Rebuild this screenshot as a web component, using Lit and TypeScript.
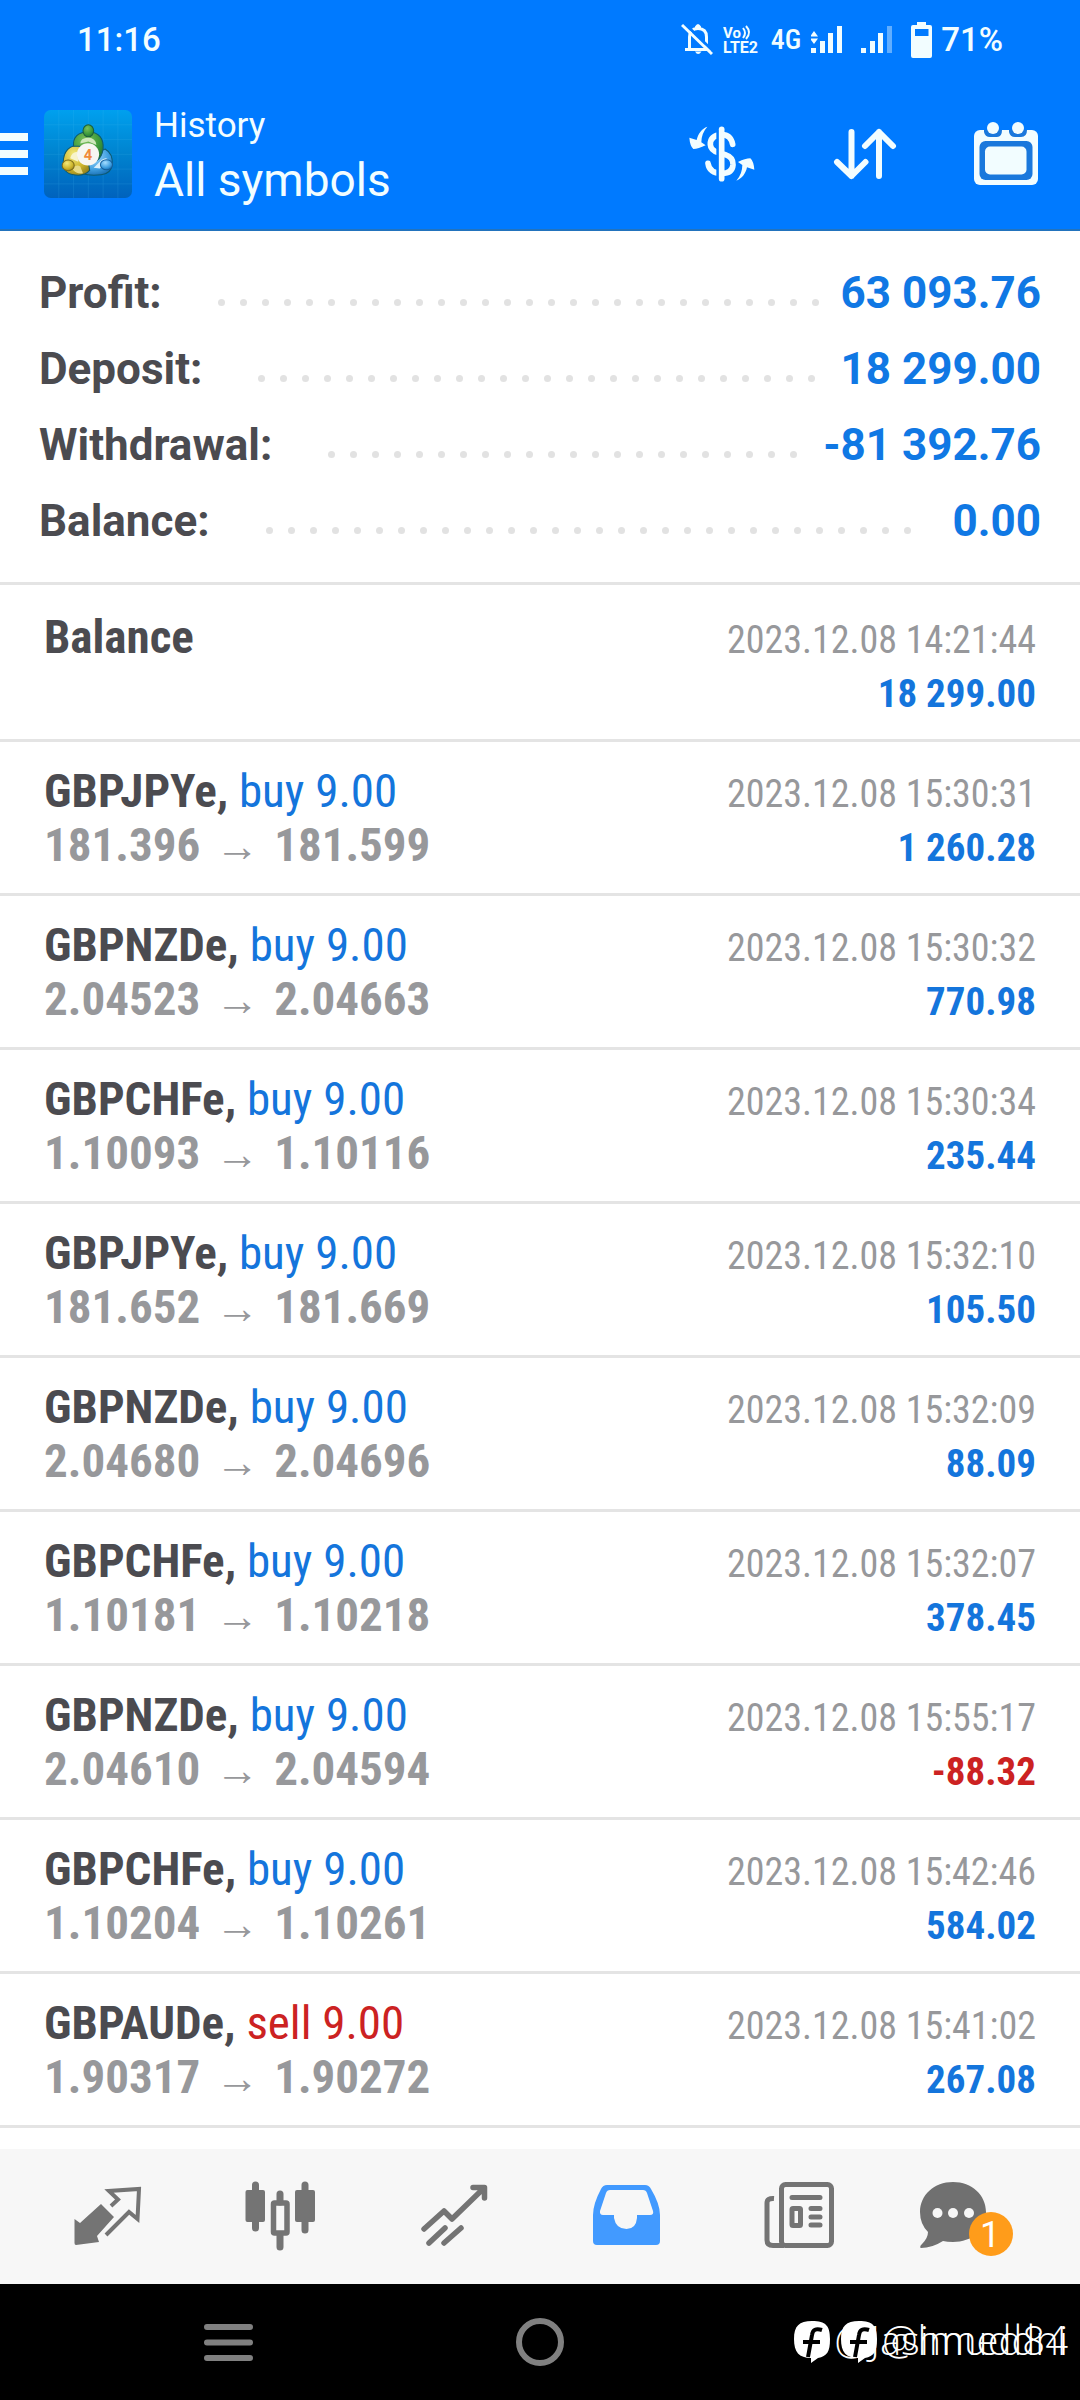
import { LitElement, html, css, svg, nothing } from "lit";
import { customElement, property } from "lit/decorators.js";

type Side = "buy" | "sell";

interface Deal {
  symbol: string;
  side?: Side;
  volume?: string;
  open?: string;
  close?: string;
  time: string;
  amount: string;
}

const SUMMARY = [
  { label: "Profit:", value: "63 093.76" },
  { label: "Deposit:", value: "18 299.00" },
  { label: "Withdrawal:", value: "-81 392.76" },
  { label: "Balance:", value: "0.00" },
];

const DEALS: Deal[] = [
  { symbol: "Balance", time: "2023.12.08 14:21:44", amount: "18 299.00" },
  { symbol: "GBPJPYe", side: "buy", volume: "9.00", open: "181.396", close: "181.599", time: "2023.12.08 15:30:31", amount: "1 260.28" },
  { symbol: "GBPNZDe", side: "buy", volume: "9.00", open: "2.04523", close: "2.04663", time: "2023.12.08 15:30:32", amount: "770.98" },
  { symbol: "GBPCHFe", side: "buy", volume: "9.00", open: "1.10093", close: "1.10116", time: "2023.12.08 15:30:34", amount: "235.44" },
  { symbol: "GBPJPYe", side: "buy", volume: "9.00", open: "181.652", close: "181.669", time: "2023.12.08 15:32:10", amount: "105.50" },
  { symbol: "GBPNZDe", side: "buy", volume: "9.00", open: "2.04680", close: "2.04696", time: "2023.12.08 15:32:09", amount: "88.09" },
  { symbol: "GBPCHFe", side: "buy", volume: "9.00", open: "1.10181", close: "1.10218", time: "2023.12.08 15:32:07", amount: "378.45" },
  { symbol: "GBPNZDe", side: "buy", volume: "9.00", open: "2.04610", close: "2.04594", time: "2023.12.08 15:55:17", amount: "-88.32" },
  { symbol: "GBPCHFe", side: "buy", volume: "9.00", open: "1.10204", close: "1.10261", time: "2023.12.08 15:42:46", amount: "584.02" },
  { symbol: "GBPAUDe", side: "sell", volume: "9.00", open: "1.90317", close: "1.90272", time: "2023.12.08 15:41:02", amount: "267.08" },
];

const DOTS = Array.from({ length: 60 });

@customElement("status-bar")
class StatusBar extends LitElement {
  static styles = css`
    :host { display: flex; align-items: center; height: 78px; padding: 2px 77px 0; box-sizing: border-box; color: #f2fdff; font: 500 33px/40px Roboto, sans-serif; }
    .fill { flex: 1; }
    svg { display: block; }
    .volte { margin-left: 10px; }
    .net { margin-left: 8px; font: 500 28px/40px "Roboto Condensed", Roboto, sans-serif; }
    .sig { margin-left: 10px; }
    .sig2 { margin-left: 18px; }
    .bat { margin: 0 8px 0 18px; }
    text { font-family: Roboto, sans-serif; font-weight: 700; fill: #f2fdff; }
  `;
  render() {
    return html`
      <span>11:16</span><span class="fill"></span>
      <svg width="32" height="36" viewBox="681 21 32 36" fill="none" stroke="#f2fdff" stroke-width="3">
        <path d="M685 48.500H711M689.500 48V36Q690 27.500 698 27.500Q706.500 27.500 706.500 36V48" />
        <path d="M695 27V25.500Q698 20.500 701 25.500V27ZM695 50.500H701.500Q698 55.500 695 50.500Z" fill="#f2fdff" stroke="none" />
        <path d="M684 22L714 51" stroke="#007aff" />
        <path d="M682 24L712 53" />
      </svg>
      <svg class="volte" width="40" height="36" viewBox="724 21 40 36">
        <text x="724" y="37" font-size="15">Vo</text>
        <text x="724" y="52" font-size="16">LTE2</text>
        <path d="M744 27Q748 32 744 37M747 25Q753 31.500 747 38" fill="none" stroke="#f2fdff" stroke-width="2" />
      </svg>
      <span class="net">4G</span>
      <svg class="sig" width="32" height="30" viewBox="811 24 32 30" fill="#f2fdff">
        <path d="M811 47h5v5h-5zM820 40h5v12h-5zM828 32h5v20h-5zM837 25h5v27h-5zM810 35.500L814 30L818 35.500ZM810 37.500L814 43L818 37.500Z" />
      </svg>
      <svg class="sig2" width="32" height="30" viewBox="860 24 32 30" fill="#f2fdff">
        <path d="M860 47h5v5h-5zM869 40h5v12h-5zM877 32h5v20h-5z" />
        <path d="M886 25h5v27h-5z" opacity=".4" />
      </svg>
      <svg class="bat" width="22" height="36" viewBox="909 20 22 36" fill="#f2fdff" fill-rule="evenodd">
        <path d="M915 20H924V23H928Q930 23 930 25V54Q930 56 928 56H911Q909 56 909 54V25Q909 23 911 23H915ZM913 27V34H926.500V27Z" />
      </svg>
      <span>71%</span>`;
  }
}

@customElement("app-toolbar")
class AppToolbar extends LitElement {
  static styles = css`
    :host { display: flex; align-items: center; height: 151px; border-bottom: 2px solid #2273bd; padding-right: 41px; color: #f2fdff; font-family: Roboto, sans-serif; }
    button { display: block; border: 0; padding: 0; margin: 0; background: none; cursor: pointer; }
    svg { display: block; }
    .menu { margin-right: 16px; }
    .titles { flex: 1; margin: 6px 0 0 22px; }
    .screen { font: 400 35px/46px Roboto, sans-serif; margin: 0; }
    .filter { font: 400 46px/62px Roboto, sans-serif; margin: 0; }
    .tools { display: flex; align-items: center; gap: 77px; }
    .four { font: 700 44px Roboto, sans-serif; fill: #f08a3c; }
  `;
  render() {
    return html`
      <button class="menu" aria-label="Open menu">
        <svg width="28" height="42" viewBox="0 0 28 42" fill="#f2fdff"><path d="M0 0H28V8H0ZM0 17H28V25H0ZM0 34H28V42H0Z" /></svg>
      </button>
      <svg width="88" height="88" viewBox="14 16 262 262" role="img" aria-label="MetaTrader 4">
        <defs>
          <linearGradient id="bg" x1="0" y1="0" x2="0" y2="1"><stop offset="0" stop-color="#00a0ee" /><stop offset=".5" stop-color="#0083cf" /><stop offset="1" stop-color="#0062bd" /></linearGradient>
          <radialGradient id="g" cx=".4" cy=".3" r=".8"><stop offset="0" stop-color="#7cc05c" /><stop offset=".6" stop-color="#3c9a3c" /><stop offset="1" stop-color="#1c6a35" /></radialGradient>
          <radialGradient id="y" cx=".4" cy=".3" r=".8"><stop offset="0" stop-color="#f2e97c" /><stop offset=".6" stop-color="#cdb52c" /><stop offset="1" stop-color="#8c7a1c" /></radialGradient>
          <radialGradient id="b" cx=".4" cy=".3" r=".8"><stop offset="0" stop-color="#a4dcff" /><stop offset=".6" stop-color="#3f9fe0" /><stop offset="1" stop-color="#0f62a8" /></radialGradient>
        </defs>
        <rect x="14" y="16" width="262" height="262" rx="20" fill="url(#bg)" />
        <path d="M58 16V278M102 16V278M146 16V278M190 16V278M234 16V278M14 60H276M14 104H276M14 148H276M14 192H276M14 236H276" stroke="#4cc0f4" stroke-width="1.500" opacity=".3" />
        <g stroke="#0d5a70" stroke-width="3">
          <path d="M128 206Q112 176 136 158L196 132Q220 146 217 178Q214 206 184 209Q150 212 128 206Z" fill="url(#b)" />
          <path d="M72 186Q66 128 112 120L140 130L150 196Q132 216 98 208Q78 204 72 186Z" fill="url(#y)" />
          <path d="M102 124Q98 84 146 80Q194 84 190 132Q186 158 172 166L120 124Z" fill="url(#g)" />
        </g>
        <path d="M122 116Q122 100 146 98Q168 100 170 120L146 110Z" fill="#cfe8bc" />
        <path d="M92 160Q96 142 112 140L116 170Z" fill="#f8f4cc" />
        <path d="M162 188L186 164Q202 154 204 166L180 190Z" fill="#d8effc" />
        <path d="M102 186Q112 178 122 184L130 204Q112 208 100 194Z" fill="#e6d985" />
        <ellipse cx="146" cy="78" rx="16" ry="18" fill="url(#g)" stroke="#1c5e3c" stroke-width="3" />
        <ellipse cx="86" cy="181" rx="18" ry="16" fill="url(#y)" stroke="#7b6b1c" stroke-width="3" />
        <ellipse cx="200" cy="179" rx="18" ry="15" fill="url(#b)" stroke="#155f9c" stroke-width="3" />
        <circle cx="145" cy="148" r="33" fill="#f7f6f2" />
        <text class="four" x="145" y="164" text-anchor="middle">4</text>
      </svg>
      <div class="titles"><p class="screen">History</p><h1 class="filter">All symbols</h1></div>
      <div class="tools">
        <button aria-label="Currency">
          <svg width="68" height="64" viewBox="24 6 204 192" fill="#f2fdff">
            <path d="M82 20C66 26 54 40 50 60L28 53Q30 78 40 87Q55 87 77 76L64 67Q64 40 82 20Z" />
            <path d="M169 182C185 176 197 162 201 142L223 149Q221 124 211 115Q196 115 174 126L187 135Q187 162 169 182Z" />
            <path d="M158 73Q152 44 126 44Q90 46 91 74Q92 92 116 98L136 104Q160 112 159 134Q157 160 126 160Q88 160 84 130" fill="none" stroke="#f2fdff" stroke-width="17" stroke-linecap="round" />
            <path d="M113 26V176" stroke="#007aff" stroke-width="8" />
            <path d="M125 28V176" stroke="#f2fdff" stroke-width="17" stroke-linecap="round" />
          </svg>
        </button>
        <button aria-label="Sort">
          <svg width="64" height="64" viewBox="833 122 64 64" fill="none" stroke="#f2fdff" stroke-width="6" stroke-linecap="round" stroke-linejoin="round">
            <path d="M851.500 132V176M837 162L851.500 176L865.500 162M879 176V132M865 146L879 132L893 146" />
          </svg>
        </button>
        <button aria-label="Select period">
          <svg width="65" height="64" viewBox="975 121 65 64">
            <rect x="975" y="129" width="64" height="55" rx="6" fill="#f2fdff" />
            <path d="M985 129V131Q986 136 991 136H998Q1003 136 1003 129ZM1010 129V131Q1011 136 1016 136H1022Q1028 136 1028 129Z" fill="#1a78dc" />
            <circle cx="994" cy="127" r="6" fill="#f2fdff" /><circle cx="1019" cy="127" r="6" fill="#f2fdff" />
            <rect x="980.500" y="140" width="53" height="39" rx="6" fill="#1a78dc" />
            <rect x="986" y="145.500" width="41.500" height="28" rx="5" fill="#f2fdff" />
          </svg>
        </button>
      </div>`;
  }
}

@customElement("summary-row")
class SummaryRow extends LitElement {
  @property() label = "";
  @property() value = "";
  static styles = css`
    :host { display: flex; align-items: center; height: 76px; font: 700 44px/76px Roboto, sans-serif; }
    .label { color: #4b4b50; }
    .dots { flex: 1; display: flex; flex-wrap: wrap; gap: 15px; height: 7px; overflow: hidden; margin: 18px 21px 0 56px; }
    .dot { width: 7px; height: 7px; border-radius: 50%; background: #e2e2e2; }
    .value { color: #1078e4; }
  `;
  render() {
    return html`<span class="label">${this.label}</span>
      <span class="dots">${DOTS.map(() => html`<i class="dot"></i>`)}</span>
      <span class="value">${this.value}</span>`;
  }
}

@customElement("deal-row")
class DealRow extends LitElement {
  @property({ attribute: false }) deal!: Deal;
  static styles = css`
    :host { display: flex; justify-content: space-between; padding: 22px 44px 18px; border-bottom: 3px solid #e4e4e4; font-family: "Roboto Condensed", Roboto, sans-serif; }
    p { margin: 0; font-size: 47px; line-height: 54px; white-space: pre; }
    .symbol { color: #4b4b50; font-weight: 700; }
    .buy, .up { color: #1475dc; }
    .sell, .down { color: #cc2222; }
    .prices { color: #97989b; font-weight: 700; }
    .arrow { margin: 0 15px; font: 700 44px/0 "Liberation Sans", sans-serif; }
    .right { padding-top: 3px; text-align: right; }
    .right .time { color: #97989b; font-size: 38px; }
    .right .amount { font-weight: 700; font-size: 39px; }
  `;
  render() {
    const d = this.deal;
    return html`
      <div>
        <p><span class="symbol">${d.symbol}${d.side ? "," : ""}</span>${d.side ? html` <span class=${d.side}>${d.side} ${d.volume}</span>` : nothing}</p>
        ${d.open ? html`<p class="prices">${d.open}<span class="arrow">→</span>${d.close}</p>` : nothing}
      </div>
      <div class="right">
        <p class="time">${d.time}</p>
        <p class="amount ${d.amount.startsWith("-") ? "down" : "up"}">${d.amount}</p>
      </div>`;
  }
}

const TABS = [
  { name: "Quotes", w: 68, box: "75 2181 68 70", art: svg`
    <path d="M75.500 2219L81 2223L102 2204L115 2217L98 2236L100 2242L77 2245Q75.500 2245 75.500 2243Z" fill="#747474" />
    <path d="M112 2206L119 2199.500L110 2191L140 2189L138.500 2219L130 2212L107 2235" fill="none" stroke="#747474" stroke-width="4" />` },
  { name: "Charts", w: 71, box: "246 2181 71 70", art: svg`
    <path d="M256.500 2185V2228M306 2185V2230M281 2194V2202M281 2235V2247" stroke="#747474" stroke-width="7" stroke-linecap="round" />
    <rect x="246.500" y="2190" width="19.500" height="32" rx="2" fill="#747474" /><rect x="296" y="2190" width="20" height="32" rx="2" fill="#747474" />
    <rect x="274.500" y="2203" width="13.500" height="30" rx="1" fill="none" stroke="#747474" stroke-width="5.500" />` },
  { name: "Trade", w: 68, box: "420 2181 68 70", art: svg`
    <path d="M424 2229L444 2211L452 2219L484 2188M473 2187.500H484.500V2198M429 2243L445 2228M444 2243L461 2228" fill="none" stroke="#747474" stroke-width="5.500" stroke-linecap="round" stroke-linejoin="round" />` },
  { name: "History", w: 68, box: "594 2181 68 70", art: svg`
    <path fill-rule="evenodd" fill="#429aff" d="M608 2185H646Q650 2185 652 2189Q661 2204 661 2215V2241Q661 2245 657 2245H598Q594 2245 594 2241V2215Q594 2204 602 2189Q604 2185 608 2185ZM611 2190Q608 2190 607 2193L601 2211Q600.500 2215 604 2215H615V2218Q617 2229 627.500 2229Q637 2229 638 2218V2215H651Q655 2215 654 2211L648 2193Q647 2190 644 2190Z" />` },
  { name: "News", w: 71, box: "766 2181 71 70", art: svg`
    <g fill="none" stroke="#747474" stroke-width="5"><rect x="783.500" y="2184.500" width="50" height="61" rx="4" />
    <path d="M776 2198.500Q769 2198 769 2203V2240Q769 2245.500 775 2245.500H786" />
    <path d="M794 2197.500H822M813 2208.500H822M813 2217H822M813 2225H822" stroke-linecap="round" />
    <rect x="794" y="2208.500" width="8.500" height="17" rx="1" /></g>` },
  { name: "Messages", w: 106, box: "920 2176 106 80", art: svg`
    <path fill="#707070" d="M953 2182C972 2182 986 2195 986 2212C986 2230 972 2242 953 2242Q947 2242 943 2241Q932 2248 921 2248Q919 2247 922 2244Q928 2238 928 2232Q920 2224 920 2212C920 2195 934 2182 953 2182Z" />
    <g fill="#f6f6f6"><circle cx="937.500" cy="2213" r="5" /><circle cx="953" cy="2213" r="5" /><circle cx="969" cy="2213" r="5" /></g>
    <circle cx="991" cy="2234" r="22" fill="#ff9c1a" />
    <text class="count" x="990" y="2247" text-anchor="middle">1</text>` },
];

@customElement("tab-bar")
class TabBar extends LitElement {
  static styles = css`
    :host { display: flex; align-items: center; height: 135px; padding: 0 21px; background: #f7f7f7; }
    button { flex: 1; display: flex; align-items: center; justify-content: center; height: 100%; padding: 0 0 2px; border: 0; background: none; cursor: pointer; }
    svg { display: block; }
    .count { font: 400 36px Roboto, sans-serif; fill: #fff; }
  `;
  render() {
    return TABS.map((t) => {
      const h = Number(t.box.split(" ")[3]);
      return html`<button aria-label=${t.name}><svg width=${t.w} height=${h} viewBox=${t.box}>${t.art}</svg></button>`;
    });
  }
}

@customElement("system-bar")
class SystemBar extends LitElement {
  static styles = css`
    :host { position: relative; display: grid; grid-template-columns: repeat(3, 1fr); flex: 1; min-height: 116px; padding: 0 72px; background: #000; box-sizing: border-box; }
    button { display: flex; align-items: center; justify-content: center; border: 0; padding: 0; background: none; cursor: pointer; }
    .mark { position: absolute; top: 32px; right: 12px; display: flex; align-items: center; gap: 4px; color: #fff; font: 300 40px/48px "Open Sans", sans-serif; white-space: nowrap; }
    .mark span { padding-bottom: 4px; }
  `;
  private badge() {
    return html`<svg width="37" height="42" viewBox="0 0 37 42">
      <path d="M18 0C32 0 36 5 36 18C36 31 33 35 24 37L17 42V37C5 37 0 31 0 18C0 5 5 0 18 0Z" fill="#fff" />
      <path d="M28 9Q19 6 18 14L14 36M9 21H26" fill="none" stroke="#000" stroke-width="4" />
    </svg>`;
  }
  render() {
    return html`
      <button aria-label="Recent apps"><svg width="49" height="37" viewBox="0 0 49 37"><path d="M3 3H46M3 18.500H46M3 34H46" stroke="#808080" stroke-width="6" stroke-linecap="round" /></svg></button>
      <button aria-label="Home"><svg width="48" height="48" viewBox="0 0 48 48"><circle cx="24" cy="24" r="21" fill="none" stroke="#808080" stroke-width="6" /></svg></button>
      <div class="mark">${this.badge()}<span>@Jasimuddni</span></div>
      <div class="mark">${this.badge()}<span>@hmed84</span></div>`;
  }
}

@customElement("app-root")
class AppRoot extends LitElement {
  static styles = css`
    :host { display: flex; flex-direction: column; min-height: 100vh; background: #fff; }
    .top { background: #007aff; }
    .summary { padding: 24px 39px 23px; border-bottom: 3px solid #e4e4e4; }
    .deals { flex: none; padding: 3px 0 21px; }
  `;
  render() {
    return html`
      <header class="top"><status-bar></status-bar><app-toolbar></app-toolbar></header>
      <section class="summary">${SUMMARY.map((s) => html`<summary-row .label=${s.label} .value=${s.value}></summary-row>`)}</section>
      <main class="deals">${DEALS.map((d) => html`<deal-row .deal=${d}></deal-row>`)}</main>
      <tab-bar></tab-bar>
      <system-bar></system-bar>`;
  }
}
